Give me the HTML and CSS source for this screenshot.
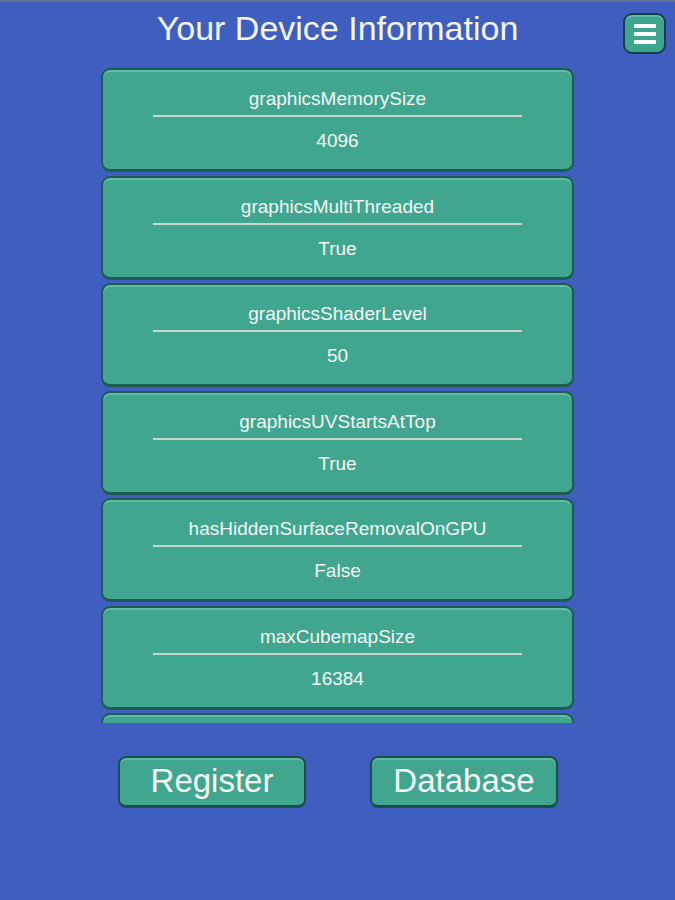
FILE: index.html
```html
<!DOCTYPE html>
<html>
<head>
<meta charset="utf-8">
<link rel="stylesheet" href="styles.css">
</head>
<body>
<div class="page">
  <div class="topstrip"></div>
  <header class="header">
    <h1 class="title">Your Device Information</h1>
    <button class="menu" aria-label="Menu">
      <span class="bar"></span><span class="bar"></span><span class="bar"></span>
    </button>
  </header>
  <div class="list">
    <div class="card"><div class="label">graphicsMemorySize</div><div class="rule"></div><div class="value">4096</div></div>
    <div class="card"><div class="label">graphicsMultiThreaded</div><div class="rule"></div><div class="value">True</div></div>
    <div class="card"><div class="label">graphicsShaderLevel</div><div class="rule"></div><div class="value">50</div></div>
    <div class="card"><div class="label">graphicsUVStartsAtTop</div><div class="rule"></div><div class="value">True</div></div>
    <div class="card"><div class="label">hasHiddenSurfaceRemovalOnGPU</div><div class="rule"></div><div class="value">False</div></div>
    <div class="card"><div class="label">maxCubemapSize</div><div class="rule"></div><div class="value">16384</div></div>
    <div class="card card-peek"></div>
  </div>
  <div class="actions">
    <button class="btn">Register</button>
    <button class="btn">Database</button>
  </div>
</div>
</body>
</html>
```
FILE: styles.css
```css
html, body {
  margin: 0;
  padding: 0;
  background: #3e5fc0;
}
.page {
  width: 675px;
  height: 900px;
  display: flex;
  flex-direction: column;
  font-family: "Liberation Sans", Arial, sans-serif;
  color: #f2f7f5;
  overflow: hidden;
}
.topstrip {
  height: 2px;
  background: #6a6f96;
}
.header {
  position: relative;
  height: 66px;
  display: flex;
  justify-content: center;
}
.title {
  margin: 0;
  padding-top: 7px;
  font-size: 34px;
  font-weight: normal;
  line-height: 38px;
  color: #f4f6fb;
}
.menu {
  position: absolute;
  right: 9px;
  top: 11px;
  width: 43px;
  height: 41px;
  box-sizing: border-box;
  border: 2px solid #173f48;
  border-radius: 9px;
  background: #3fa58e;
  box-shadow: inset 0 2px 0 #5cbda5;
  padding: 0;
  display: flex;
  flex-direction: column;
  align-items: center;
  justify-content: center;
  gap: 4px;
}
.bar {
  width: 22px;
  height: 4px;
  background: #ffffff;
  border-radius: 1px;
}
.list {
  height: 655px;
  overflow: hidden;
  display: flex;
  flex-direction: column;
  align-items: center;
  gap: 3.5px;
}
.card {
  flex: none;
  width: 473px;
  height: 104px;
  box-sizing: border-box;
  border: 2px solid #1d5c4f;
  border-bottom-width: 3px;
  border-radius: 9px;
  background: #41a690;
  box-shadow: inset 0 2px 0 #62bca6;
  display: flex;
  flex-direction: column;
  align-items: center;
}
.label {
  margin-top: 18px;
  font-size: 19px;
  line-height: 22px;
  height: 22px;
}
.rule {
  margin-top: 5px;
  width: 369px;
  height: 2px;
  background: #c9d3cf;
}
.value {
  margin-top: 13px;
  font-size: 19px;
  line-height: 22px;
}
.actions {
  display: flex;
  justify-content: center;
  gap: 64px;
  padding-top: 33px;
  padding-left: 1px;
}
.btn {
  width: 188px;
  height: 52px;
  box-sizing: border-box;
  border: 2px solid #1c4e4c;
  border-bottom-width: 3px;
  border-radius: 8px;
  background: #41a690;
  box-shadow: inset 0 2px 0 #5cbca4;
  color: #f4f8f6;
  font-family: "Liberation Sans", Arial, sans-serif;
  font-size: 33px;
  line-height: normal;
  padding: 0 0 2px 0;
  display: flex;
  align-items: center;
  justify-content: center;
}
```
